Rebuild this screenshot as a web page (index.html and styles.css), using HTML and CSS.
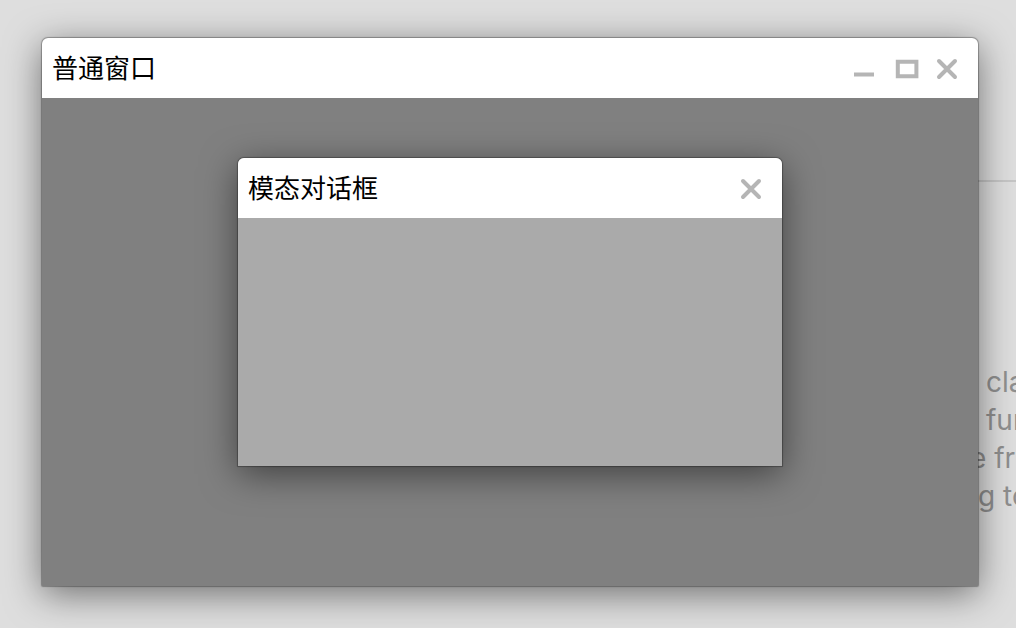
FILE: index.html
```html
<!DOCTYPE html>
<html lang="zh-CN">
<head>
<meta charset="utf-8">
<title>普通窗口</title>
<link rel="stylesheet" href="styles.css">
</head>
<body>
<main class="page">
  <hr class="rule">
  <p class="copy">
    <span class="line">cla</span>
    <span class="line">fun</span>
    <span class="line line-long">e fr</span>
    <span class="line line-mid">g to</span>
  </p>
</main>
<section class="window" aria-labelledby="window-title">
  <header class="titlebar">
    <h1 class="title" id="window-title">普通窗口</h1>
    <div class="controls">
      <button class="control" type="button" aria-label="最小化">
        <svg class="icon" viewBox="0 0 24 24"><path d="M-1 17.5h20"/></svg>
      </button>
      <button class="control" type="button" aria-label="最大化">
        <svg class="icon" viewBox="0 0 24 24"><path d="M2.8 4.8h18.6v14.4H2.8z"/></svg>
      </button>
      <button class="control" type="button" aria-label="关闭">
        <svg class="icon" viewBox="0 0 24 24"><path d="M4 4l16 16M20 4L4 20" stroke-linecap="round"/></svg>
      </button>
    </div>
  </header>
  <div class="body">
    <div class="dialog" role="dialog" aria-modal="true" aria-labelledby="dialog-title">
      <header class="titlebar">
        <h2 class="title" id="dialog-title">模态对话框</h2>
        <div class="controls">
          <button class="control" type="button" aria-label="关闭">
            <svg class="icon" viewBox="0 0 24 24"><path d="M4 4l16 16M20 4L4 20" stroke-linecap="round"/></svg>
          </button>
        </div>
      </header>
      <div class="dialog-body"></div>
    </div>
  </div>
</section>
</body>
</html>
```
FILE: styles.css
```css
* {
  box-sizing: border-box;
}

body {
  margin: 0;
  min-height: 100vh;
  overflow: hidden;
  background: #dedede;
  font-family: "Noto Sans CJK SC", sans-serif;
}

.page {
  height: 100vh;
  padding-top: 180px;
  overflow: hidden;
}

.rule {
  width: 50%;
  margin: 0 0 0 auto;
  border: 0;
  height: 2px;
  background: #c6c6c6;
}

.copy {
  display: flex;
  flex-direction: column;
  width: 30px;
  margin: 181px 0 0 auto;
  font-family: Inter, sans-serif;
  font-size: 28px;
  line-height: 38px;
  color: #8f8f8f;
  white-space: nowrap;
}

.line-long {
  margin-left: -16px;
}

.line-mid {
  margin-left: -8px;
}

.window {
  position: absolute;
  inset: 38px 38px 42px 42px;
  display: flex;
  flex-direction: column;
  border-radius: 6px 6px 1px 1px;
  background: #808080;
  box-shadow: 0 0 1px 1px rgba(0, 0, 0, 0.3), 0 8px 36px rgba(0, 0, 0, 0.5);
}

.titlebar {
  display: flex;
  align-items: center;
  justify-content: space-between;
  height: 60px;
  padding: 0 19px 0 10px;
  border-radius: 6px 6px 0 0;
  background: #fff;
}

.title {
  margin: 0;
  font-size: 26px;
  font-weight: 400;
  line-height: 58px;
  padding-bottom: 2px;
  color: #000;
}

.controls {
  display: flex;
  gap: 16px;
  padding-top: 2px;
}

.control {
  display: flex;
  padding: 0;
  border: 0;
  background: none;
}

.icon {
  width: 24px;
  height: 24px;
  overflow: visible;
  fill: none;
  stroke: #b5b5b5;
  stroke-width: 4;
}

.body {
  flex: 1;
}

.dialog {
  position: absolute;
  inset: 120px 196px;
  display: flex;
  flex-direction: column;
  border-radius: 6px 6px 0 0;
  background: #aaa;
  box-shadow: 0 0 1px 1px rgba(0, 0, 0, 0.3), 0 8px 36px rgba(0, 0, 0, 0.5);
}

.dialog-body {
  flex: 1;
}
```
